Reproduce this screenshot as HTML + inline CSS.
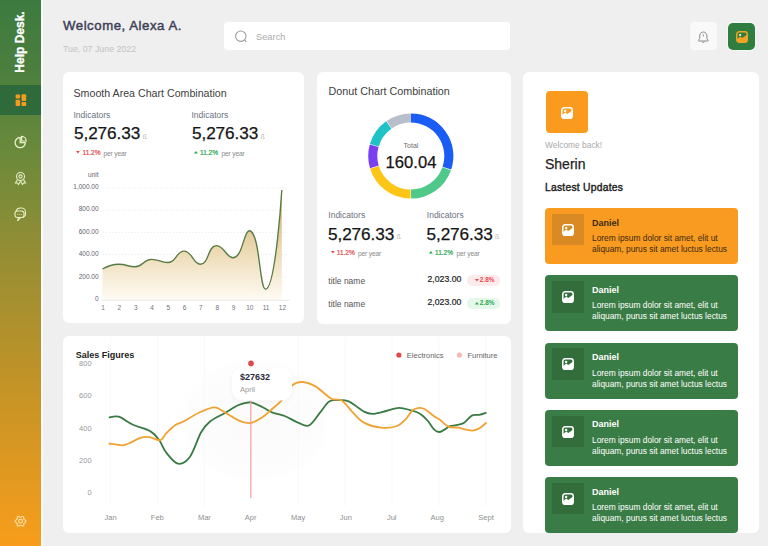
<!DOCTYPE html>
<html><head><meta charset="utf-8">
<style>
*{margin:0;padding:0;box-sizing:border-box}
html,body{width:768px;height:546px;overflow:hidden;background:#efefef;font-family:"Liberation Sans",sans-serif;position:relative}
.a{position:absolute;white-space:nowrap}
.card{position:absolute;background:#fff;border-radius:6px}
#side{position:absolute;left:0;top:0;width:41px;height:546px;background:linear-gradient(180deg,#3c7b40 0%,#4a7e3e 12%,#6b8a3b 28%,#988e33 48%,#c69426 72%,#f89d1b 100%)}
#sline{position:absolute;left:41px;top:0;width:2px;height:546px;background:#fafafa}
.t{color:#222}
.ind{font-size:8.5px;color:#6b7280}
.num{font-size:17.2px;color:#151515;letter-spacing:-0.1px;-webkit-text-stroke:0.25px #151515}
.unit{font-size:7px;color:#b8b8b8;margin-top:0.5px}
.chg{font-size:6.5px;-webkit-text-stroke:0.2px currentColor}
.py{font-size:6.7px;color:#8a8a8a;margin-top:0px;letter-spacing:-0.18px}
.item{position:absolute;left:22px;width:193px;height:56px;border-radius:4px}
.item .ib{position:absolute;left:6.5px;top:5.8px;width:32px;height:31.5px}
.item .nm{position:absolute;left:47px;top:9.5px;font-size:9px;font-weight:bold}
.item .l1{position:absolute;left:47px;top:25px;font-size:8.4px}
.item .l2{position:absolute;left:47px;top:36.2px;font-size:8.4px}
.org{background:#fa9b21}
.org .ib{background:#d98a24}
.org .nm,.org .l1,.org .l2{color:#3b2a12}
.grn{background:#3a7c45}
.grn .ib{background:#336d3c}
.grn .nm,.grn .l1,.grn .l2{color:#fff}
</style></head><body>
<div id="side"></div>
<div id="sline"></div>
<!-- Help Desk -->
<div class="a" style="left:20px;top:42px;transform:translate(-50%,-50%) rotate(-90deg);color:#fff;font-weight:bold;font-size:12px;-webkit-text-stroke:0.3px #fff">Help Desk.</div>
<div class="a" style="left:0;top:85px;width:41px;height:30px;background:#2f6a3a"></div>
<svg class="a" style="left:0;top:0" width="41" height="546" viewBox="0 0 41 546">
  <g fill="#f39c1f">
    <rect x="15.6" y="94.6" width="4.5" height="3.8" rx="0.8"/>
    <rect x="21.5" y="94.3" width="4.7" height="6.6" rx="0.8"/>
    <rect x="15.6" y="99.8" width="4.5" height="6.2" rx="0.8"/>
    <rect x="21.5" y="102.1" width="4.7" height="3.9" rx="0.8"/>
  </g>
  <g fill="none" stroke="#e6efc6" stroke-width="1.1">
    <path d="M20.2,137.5 A5.1,5.1 0 1 0 25.3,142.6 L20.2,142.6 Z" stroke-width="1.3"/>
    <path d="M21.6,136.4 A4.6,4.6 0 0 1 26.2,141 L21.6,141 Z" stroke-width="1.2"/>
    <circle cx="20.5" cy="176.5" r="4"/>
    <circle cx="20.5" cy="176.5" r="1.6"/>
    <path d="M17.5,179.5 L15.5,183 L17.5,183 L18.5,184.5 L20.5,181"/>
    <path d="M23.5,179.5 L25.5,183 L23.5,183 L22.5,184.5 L20.5,181"/>
    <path d="M16,211 a4.5,4.5 0 0 1 4.5,-3 h1 a4,4 0 0 1 4,4 v2 a4,4 0 0 1 -3,3.5"/>
    <rect x="15" y="211" width="9" height="6.5" rx="2.5"/>
    <path d="M17.5,221 l1.2,-3.5 h2 z"/>
  </g>
  <g fill="#e6efc6"><circle cx="17.8" cy="214.2" r="0.5"/><circle cx="19.5" cy="214.2" r="0.5"/><circle cx="21.2" cy="214.2" r="0.5"/></g>
  <g fill="none" stroke="#fde2a8" stroke-width="1.1">
    <path d="M20.50,517.30 L20.86,517.22 L21.26,517.02 L21.72,516.76 L22.23,516.55 L22.74,516.49 L23.20,516.62 L23.54,516.95 L23.75,517.43 L23.82,517.98 L23.83,518.50 L23.85,518.95 L23.96,519.30 L24.21,519.57 L24.59,519.81 L25.04,520.08 L25.47,520.42 L25.79,520.84 L25.90,521.30 L25.79,521.76 L25.47,522.18 L25.04,522.52 L24.59,522.79 L24.21,523.03 L23.96,523.30 L23.85,523.65 L23.83,524.10 L23.82,524.62 L23.75,525.17 L23.54,525.65 L23.20,525.98 L22.74,526.11 L22.23,526.05 L21.72,525.84 L21.26,525.58 L20.86,525.38 L20.50,525.30 L20.14,525.38 L19.74,525.58 L19.28,525.84 L18.77,526.05 L18.26,526.11 L17.80,525.98 L17.46,525.65 L17.25,525.17 L17.18,524.62 L17.17,524.10 L17.15,523.65 L17.04,523.30 L16.79,523.03 L16.41,522.79 L15.96,522.52 L15.53,522.18 L15.21,521.76 L15.10,521.30 L15.21,520.84 L15.53,520.42 L15.96,520.08 L16.41,519.81 L16.79,519.57 L17.04,519.30 L17.15,518.95 L17.17,518.50 L17.18,517.98 L17.25,517.43 L17.46,516.95 L17.80,516.62 L18.26,516.49 L18.77,516.55 L19.28,516.76 L19.74,517.02 L20.14,517.22 L20.50,517.30Z" stroke-linejoin="round"/>
    <circle cx="20.5" cy="521.3" r="1.9"/>
  </g>
</svg>

<!-- header -->
<div class="a" style="left:63px;top:18.3px;font-size:13.2px;color:#3d3f58;letter-spacing:0.55px;-webkit-text-stroke:0.45px #3d3f58">Welcome, Alexa A.</div>
<div class="a" style="left:63px;top:43.5px;font-size:8.8px;color:#c3c3c3">Tue, 07 June 2022</div>
<div class="a" style="left:224px;top:22px;width:286px;height:28px;background:#fff;border-radius:4px"></div>
<svg class="a" style="left:230px;top:26px" width="22" height="22" viewBox="0 0 22 22"><circle cx="10.8" cy="10.2" r="5.2" fill="none" stroke="#9c9c9c" stroke-width="1.1"/><path d="M14.6,14 L16.3,15.8" stroke="#9c9c9c" stroke-width="1.1"/></svg>
<div class="a" style="left:256px;top:31.8px;font-size:9.3px;color:#ababab">Search</div>
<div class="a" style="left:690px;top:22px;width:27px;height:28px;background:#f9f9f9;border-radius:4px"></div>
<svg class="a" style="left:690px;top:22px" width="27" height="28" viewBox="0 0 27 28"><path d="M13.3,10 c-2.3,0 -3.6,1.8 -3.6,4 v2.6 l-1.3,1.8 c-0.2,0.3 0,0.6 0.3,0.6 h9.2 c0.3,0 0.5,-0.3 0.3,-0.6 l-1.3,-1.8 v-2.6 c0,-2.2 -1.3,-4 -3.6,-4 z" fill="none" stroke="#8a8a8a" stroke-width="1"/><path d="M12.3,19.5 a1,1 0 0 0 2,0" fill="none" stroke="#8a8a8a" stroke-width="0.9"/><path d="M13.3,12.3 v2.2" stroke="#8a8a8a" stroke-width="0.9"/></svg>
<div class="a" style="left:727.5px;top:22.5px;width:27.5px;height:27px;background:#2f7d3f;border-radius:5px;box-shadow:0 0 0 1px #f6f6f6"></div>
<svg class="a" style="left:735.5px;top:30.5px" width="12" height="12" viewBox="0 0 12 12"><rect x="0.8" y="0.8" width="10.4" height="10.4" rx="2.3" fill="none" stroke="#f2a224" stroke-width="1.5"/><path d="M0.8,8.3 L4.3,5.6 L6.3,7 L11.2,3.6 V9 a2.2,2.2 0 0 1 -2.2,2.2 H3 a2.2,2.2 0 0 1 -2.2,-2.2 Z" fill="#f2a224"/><circle cx="4.1" cy="3.9" r="1.2" fill="#e9d9a0"/></svg>

<!-- card 1 -->
<div class="card" style="left:63px;top:72px;width:241px;height:251px"></div>
<div class="a t" style="left:73.5px;top:87px;font-size:10.65px;color:#404040">Smooth Area Chart Combination</div>
<div class="a ind" style="left:73.5px;top:109.5px">Indicators</div>
<div class="a num" style="left:74px;top:122.8px">5,276.33</div>
<div class="a unit" style="left:142.5px;top:132px">ß</div>
<svg class="a" style="left:76.3px;top:151.3px" width="4" height="3"><polygon points="0,0 3.8,0 1.9,2.5" fill="#e5484d"/></svg><div class="a chg" style="left:82.5px;top:148.6px;color:#e5484d">11.2%</div>
<div class="a py" style="left:103.5px;top:149.5px">per year</div>
<div class="a ind" style="left:191.5px;top:109.5px">Indicators</div>
<div class="a num" style="left:192px;top:122.8px">5,276.33</div>
<div class="a unit" style="left:260.5px;top:132px">ß</div>
<svg class="a" style="left:194.3px;top:151.3px" width="4" height="3"><polygon points="0,2.5 3.8,2.5 1.9,0" fill="#1fa84f"/></svg><div class="a chg" style="left:200px;top:148.6px;color:#1fa84f">11.2%</div>
<div class="a py" style="left:221.5px;top:149.5px">per year</div>

<svg class="a" style="left:0;top:0" width="768" height="546" viewBox="0 0 768 546">
  <defs>
    <linearGradient id="ag" x1="0" y1="0" x2="0" y2="1">
      <stop offset="0" stop-color="#c4a866"/>
      <stop offset="0.5" stop-color="#e9d6ac"/>
      <stop offset="1" stop-color="#fffbf3"/>
    </linearGradient>
  </defs>
  <g stroke="#ededed" stroke-width="0.9" stroke-dasharray="1.6,1.6" transform="translate(0,0.4)">
    <line x1="102.5" y1="187.5" x2="288" y2="187.5"/>
    <line x1="102.5" y1="209.8" x2="288" y2="209.8"/>
    <line x1="102.5" y1="232" x2="288" y2="232"/>
    <line x1="102.5" y1="254.3" x2="288" y2="254.3"/>
    <line x1="102.5" y1="276.6" x2="288" y2="276.6"/>
  </g>
  <path d="M102.50,269.01 C102.50,269.01 110.53,264.21 118.80,264.21 C126.83,264.21 127.29,266.78 135.10,266.78 C143.59,266.78 142.94,259.31 151.40,259.31 C159.24,259.31 160.29,262.54 167.70,262.54 C176.59,262.54 176.05,251.06 184.00,251.06 C192.35,251.06 192.83,264.21 200.30,264.21 C209.13,264.21 207.65,245.59 216.60,245.59 C223.95,245.59 226.51,257.75 232.90,257.75 C242.81,257.75 243.63,230.76 249.20,230.76 C259.93,230.76 259.37,289.19 265.50,289.19 C275.67,289.19 281.80,189.95 281.80,189.95 L281.80,300.00 L102.50,300.00 Z" fill="url(#ag)"/>
  <path d="M102.50,269.01 C102.50,269.01 110.53,264.21 118.80,264.21 C126.83,264.21 127.29,266.78 135.10,266.78 C143.59,266.78 142.94,259.31 151.40,259.31 C159.24,259.31 160.29,262.54 167.70,262.54 C176.59,262.54 176.05,251.06 184.00,251.06 C192.35,251.06 192.83,264.21 200.30,264.21 C209.13,264.21 207.65,245.59 216.60,245.59 C223.95,245.59 226.51,257.75 232.90,257.75 C242.81,257.75 243.63,230.76 249.20,230.76 C259.93,230.76 259.37,289.19 265.50,289.19 C275.67,289.19 281.80,189.95 281.80,189.95" fill="none" stroke="#587a44" stroke-width="1.35"/>
  <line x1="102" y1="300.3" x2="289.5" y2="300.3" stroke="#e2e2e2" stroke-width="0.8"/>
  <g font-family="Liberation Sans" font-size="6.5" fill="#5f636d" text-anchor="end">
    <text x="98.6" y="177">unit</text>
    <text x="98.6" y="188.5">1,000.00</text>
    <text x="98.6" y="211">800.00</text>
    <text x="98.6" y="233.5">600.00</text>
    <text x="98.6" y="256">400.00</text>
    <text x="98.6" y="278.5">200.00</text>
    <text x="98.6" y="301">0</text>
  </g>
  <g font-family="Liberation Sans" font-size="6.5" fill="#6e727a" text-anchor="middle" transform="translate(0.6,0.4)">
    <text x="102.5" y="310">1</text><text x="118.8" y="310">2</text><text x="135.1" y="310">3</text><text x="151.4" y="310">4</text>
    <text x="167.7" y="310">5</text><text x="184" y="310">6</text><text x="200.3" y="310">7</text><text x="216.6" y="310">8</text>
    <text x="232.9" y="310">9</text><text x="249.2" y="310">10</text><text x="265.5" y="310">11</text><text x="281.8" y="310">12</text>
  </g>
</svg>

<!-- card 2 -->
<div class="card" style="left:317px;top:72px;width:194px;height:252px"></div>
<div class="a t" style="left:328.5px;top:85px;font-size:10.75px;color:#404040">Donut Chart Combination</div>
<svg class="a" style="left:0;top:0" width="768" height="546" viewBox="0 0 768 546">
  <path d="M410.80,113.40 A42.60,42.60 0 0 1 451.17,169.59 L442.55,166.69 A33.50,33.50 0 0 0 410.80,122.50 Z" fill="#1b5cf5"/><path d="M450.98,170.15 A42.60,42.60 0 0 1 411.10,198.60 L411.03,189.50 A33.50,33.50 0 0 0 442.40,167.13 Z" fill="#4fc98a"/><path d="M410.50,198.60 A42.60,42.60 0 0 1 370.15,168.74 L378.83,166.02 A33.50,33.50 0 0 0 410.57,189.50 Z" fill="#fdc516"/><path d="M369.98,168.17 A42.60,42.60 0 0 1 369.77,144.54 L378.53,146.99 A33.50,33.50 0 0 0 378.70,165.57 Z" fill="#7a3ff0"/><path d="M369.93,143.97 A42.60,42.60 0 0 1 386.12,121.28 L391.39,128.69 A33.50,33.50 0 0 0 378.66,146.54 Z" fill="#1ec3c6"/><path d="M386.61,120.93 A42.60,42.60 0 0 1 410.80,113.40 L410.80,122.50 A33.50,33.50 0 0 0 391.78,128.42 Z" fill="#b9bfca"/>
  <text x="411" y="148" font-family="Liberation Sans" font-size="7" fill="#6a6a6a" text-anchor="middle">Total</text>
  <text x="411" y="168" font-family="Liberation Sans" font-size="16.6" fill="#151515" stroke="#151515" stroke-width="0.25" text-anchor="middle">160.04</text>
</svg>
<div class="a ind" style="left:328.3px;top:209.5px">Indicators</div>
<div class="a num" style="left:328px;top:223.5px">5,276.33</div>
<div class="a unit" style="left:396.5px;top:232px">ß</div>
<svg class="a" style="left:330.5px;top:251.3px" width="4" height="3"><polygon points="0,0 3.8,0 1.9,2.5" fill="#e5484d"/></svg><div class="a chg" style="left:336.8px;top:248.6px;color:#e5484d">11.2%</div>
<div class="a py" style="left:358px;top:249.5px">per year</div>
<div class="a ind" style="left:426.8px;top:209.5px">Indicators</div>
<div class="a num" style="left:426.5px;top:223.5px">5,276.33</div>
<div class="a unit" style="left:495px;top:232px">ß</div>
<svg class="a" style="left:429px;top:251.3px" width="4" height="3"><polygon points="0,2.5 3.8,2.5 1.9,0" fill="#1fa84f"/></svg><div class="a chg" style="left:435px;top:248.6px;color:#1fa84f">11.2%</div>
<div class="a py" style="left:456.5px;top:249.5px">per year</div>
<div class="a" style="left:328.3px;top:275.5px;font-size:8.5px;color:#555">title name</div>
<div class="a" style="left:427.5px;top:274px;font-size:8.7px;color:#222;-webkit-text-stroke:0.2px #222">2,023.00</div>
<div class="a" style="left:466.5px;top:275px;width:33px;height:10.5px;border-radius:5px;background:#fdeaea"></div>
<svg class="a" style="left:474.5px;top:279.3px" width="4" height="3"><polygon points="0,0 3.8,0 1.9,2.5" fill="#e5484d"/></svg><div class="a" style="left:479.8px;top:276px;font-size:6.4px;font-weight:bold;color:#e5484d">2.8%</div>
<div class="a" style="left:328.3px;top:298.5px;font-size:8.5px;color:#555">title name</div>
<div class="a" style="left:427.5px;top:297px;font-size:8.7px;color:#222;-webkit-text-stroke:0.2px #222">2,023.00</div>
<div class="a" style="left:466.5px;top:298px;width:33px;height:10.5px;border-radius:5px;background:#e6f8e9"></div>
<svg class="a" style="left:474.5px;top:302.3px" width="4" height="3"><polygon points="0,2.5 3.8,2.5 1.9,0" fill="#1fa84f"/></svg><div class="a" style="left:479.8px;top:299px;font-size:6.4px;font-weight:bold;color:#1fa84f">2.8%</div>

<!-- bottom card -->
<div class="card" style="left:63px;top:336px;width:448px;height:197px"></div>
<svg class="a" style="left:0;top:0" width="768" height="546" viewBox="0 0 768 546">
  <defs>
    <radialGradient id="blob" cx="0.5" cy="0.5" r="0.5">
      <stop offset="0" stop-color="#fbfbfb"/>
      <stop offset="0.8" stop-color="#fdfdfd"/>
      <stop offset="1" stop-color="#ffffff" stop-opacity="0"/>
    </radialGradient>
    <filter id="sh" x="-30%" y="-30%" width="160%" height="160%"><feGaussianBlur stdDeviation="2"/></filter>
  </defs>
  <ellipse cx="255" cy="420" rx="85" ry="70" fill="url(#blob)"/>
  <g stroke="#f6f6f6" stroke-width="0.8">
    <line x1="110.6" y1="337" x2="110.6" y2="506"/>
    <line x1="157.5" y1="337" x2="157.5" y2="506"/>
    <line x1="204.4" y1="337" x2="204.4" y2="506"/>
    <line x1="298.2" y1="337" x2="298.2" y2="506"/>
    <line x1="345.1" y1="337" x2="345.1" y2="506"/>
    <line x1="392" y1="337" x2="392" y2="506"/>
    <line x1="438.9" y1="337" x2="438.9" y2="506"/>
    <line x1="485.8" y1="337" x2="485.8" y2="506"/>
  </g>
  <path d="M108.80,417.60 C110.45,417.45 114.67,415.50 118.70,416.70 C122.73,417.90 127.70,422.35 133.00,424.80 C138.30,427.25 146.12,428.83 150.50,431.40 C154.88,433.97 156.72,436.72 159.30,440.20 C161.88,443.68 162.88,448.38 166.00,452.30 C169.12,456.22 174.00,462.97 178.00,463.70 C182.00,464.43 186.17,461.90 190.00,456.70 C193.83,451.50 197.67,438.37 201.00,432.50 C204.33,426.63 205.93,424.80 210.00,421.50 C214.07,418.20 220.63,415.45 225.40,412.70 C230.17,409.95 234.38,406.72 238.60,405.00 C242.82,403.28 246.68,402.02 250.70,402.40 C254.72,402.78 259.05,405.58 262.70,407.30 C266.35,409.02 268.93,411.25 272.60,412.70 C276.27,414.15 280.47,414.35 284.70,416.00 C288.93,417.65 293.95,421.02 298.00,422.60 C302.05,424.18 305.33,427.15 309.00,425.50 C312.67,423.85 316.70,416.65 320.00,412.70 C323.30,408.75 326.05,403.88 328.80,401.80 C331.55,399.72 333.20,400.28 336.50,400.20 C339.80,400.12 344.02,399.40 348.60,401.30 C353.18,403.20 359.98,409.52 364.00,411.60 C368.02,413.68 369.03,413.90 372.70,413.80 C376.37,413.70 381.62,411.98 386.00,411.00 C390.38,410.02 395.00,408.05 399.00,407.90 C403.00,407.75 406.50,409.13 410.00,410.10 C413.50,411.07 417.02,411.88 420.00,413.70 C422.98,415.52 425.62,418.43 427.90,421.00 C430.18,423.57 431.87,427.27 433.70,429.10 C435.53,430.93 437.18,431.87 438.90,432.00 C440.62,432.13 442.17,430.87 444.00,429.90 C445.83,428.93 447.45,427.07 449.90,426.20 C452.35,425.33 456.27,425.32 458.70,424.70 C461.13,424.08 462.32,424.02 464.50,422.50 C466.68,420.98 469.35,416.88 471.80,415.60 C474.25,414.32 476.75,415.30 479.20,414.80 C481.65,414.30 485.28,412.97 486.50,412.60" fill="none" stroke="#3a7a43" stroke-width="1.8"/>
  <path d="M108.80,443.50 C111.00,443.80 118.70,445.30 122.00,445.30 C125.30,445.30 125.30,444.82 128.60,443.50 C131.90,442.18 138.15,438.42 141.80,437.40 C145.45,436.38 147.40,436.93 150.50,437.40 C153.60,437.87 157.82,440.83 160.40,440.20 C162.98,439.57 163.43,436.17 166.00,433.60 C168.57,431.03 172.88,426.82 175.80,424.80 C178.72,422.78 179.63,423.52 183.50,421.50 C187.37,419.48 193.87,415.07 199.00,412.70 C204.13,410.33 209.90,407.30 214.30,407.30 C218.70,407.30 221.35,410.52 225.40,412.70 C229.45,414.88 234.38,418.68 238.60,420.40 C242.82,422.12 246.68,423.55 250.70,423.00 C254.72,422.45 259.23,419.35 262.70,417.10 C266.17,414.85 268.38,412.23 271.50,409.50 C274.62,406.77 277.92,404.73 281.40,400.70 C284.88,396.67 288.92,388.42 292.40,385.30 C295.88,382.18 298.45,381.82 302.30,382.00 C306.15,382.18 310.72,383.65 315.50,386.40 C320.28,389.15 326.58,396.12 331.00,398.50 C335.42,400.88 338.33,398.33 342.00,400.70 C345.67,403.07 349.33,409.05 353.00,412.70 C356.67,416.35 359.25,420.10 364.00,422.60 C368.75,425.10 376.00,427.13 381.50,427.70 C387.00,428.27 392.97,427.40 397.00,426.00 C401.03,424.60 403.15,421.88 405.70,419.30 C408.25,416.72 410.08,412.40 412.30,410.50 C414.52,408.60 416.88,408.10 419.00,407.90 C421.12,407.70 422.55,407.95 425.00,409.30 C427.45,410.65 431.27,414.28 433.70,416.00 C436.13,417.72 437.15,417.83 439.60,419.60 C442.05,421.37 445.22,425.25 448.40,426.60 C451.58,427.95 455.77,427.20 458.70,427.70 C461.63,428.20 463.68,429.12 466.00,429.60 C468.32,430.08 470.40,430.80 472.60,430.60 C474.80,430.40 476.88,429.75 479.20,428.40 C481.52,427.05 485.28,423.48 486.50,422.50" fill="none" stroke="#f0a232" stroke-width="1.8"/>
  <line x1="250.8" y1="368" x2="250.8" y2="498" stroke="#f3a0a0" stroke-width="1.2"/>
  <rect x="232" y="369" width="60" height="33" rx="10" fill="#000" opacity="0.05" filter="url(#sh)"/>
  <rect x="232" y="367.5" width="60" height="33" rx="10" fill="#fff"/>
  <circle cx="251" cy="363.4" r="2.8" fill="#e04848"/>
  <text x="240" y="380" font-family="Liberation Sans" font-size="9" font-weight="bold" fill="#2b2b3a">$27632</text>
  <text x="240" y="391.5" font-family="Liberation Sans" font-size="7.5" fill="#9a9a9a">April</text>
  <text x="75.8" y="358" font-family="Liberation Sans" font-size="9" font-weight="bold" fill="#222">Sales Figures</text>
  <g font-family="Liberation Sans" font-size="7.5" fill="#999" text-anchor="end">
    <text x="91.6" y="365.5">800</text>
    <text x="91.6" y="398">600</text>
    <text x="91.6" y="430.5">400</text>
    <text x="91.6" y="462.5">200</text>
    <text x="91.6" y="495">0</text>
  </g>
  <g font-family="Liberation Sans" font-size="7.5" fill="#8f8f8f" text-anchor="middle">
    <text x="110.6" y="520">Jan</text><text x="157.3" y="520">Feb</text><text x="204.4" y="520">Mar</text><text x="250.7" y="520">Apr</text>
    <text x="298.1" y="520">May</text><text x="345.8" y="520">Jun</text><text x="391.7" y="520">Jul</text><text x="437.3" y="520">Aug</text><text x="486" y="520">Sept</text>
  </g>
  <circle cx="398.9" cy="355" r="2.6" fill="#e04848"/>
  <text x="406.8" y="357.6" font-family="Liberation Sans" font-size="7.5" fill="#666">Electronics</text>
  <circle cx="459.4" cy="355" r="2.6" fill="#f7b8b8"/>
  <text x="467.4" y="357.6" font-family="Liberation Sans" font-size="7.5" fill="#666">Furniture</text>
</svg>

<!-- right card -->
<div class="card" style="left:523px;top:72px;width:236px;height:461px;overflow:hidden">
  <div class="a" style="left:22.5px;top:19px;width:42px;height:41.5px;background:#fa9b1f;border-radius:4px"></div>
  <svg class="a" style="left:38px;top:34.5px" width="12" height="12" viewBox="0 0 12 12"><rect x="0.8" y="0.8" width="10.4" height="10.6" rx="2.3" fill="none" stroke="#fff" stroke-width="1.5"/><path d="M0.8,8.3 L4.3,5.6 L6.3,7 L11.2,3.6 V9.2 a2.2,2.2 0 0 1 -2.2,2.2 H3 a2.2,2.2 0 0 1 -2.2,-2.2 Z" fill="#fff"/><circle cx="4.1" cy="3.9" r="1.25" fill="#fff"/></svg>
  <div class="a" style="left:22px;top:67.5px;font-size:8.4px;color:#a9a9a9">Welcome back!</div>
  <div class="a" style="left:22px;top:84px;font-size:14px;color:#1e1e1e;-webkit-text-stroke:0.25px #1e1e1e">Sherin</div>
  <div class="a" style="left:22px;top:110px;font-size:10.3px;color:#1e1e1e;letter-spacing:0.25px;-webkit-text-stroke:0.4px #1e1e1e">Lastest Updates</div>
  <div class="item org" style="top:136.0px"><div class="ib"><svg class="a" style="left:10px;top:10px" width="12" height="12" viewBox="0 0 12 12"><rect x="0.8" y="0.8" width="10.4" height="10.6" rx="2.3" fill="none" stroke="#fff" stroke-width="1.5"/><path d="M0.8,8.3 L4.3,5.6 L6.3,7 L11.2,3.6 V9.2 a2.2,2.2 0 0 1 -2.2,2.2 H3 a2.2,2.2 0 0 1 -2.2,-2.2 Z" fill="#fff"/><circle cx="4.1" cy="3.9" r="1.25" fill="#fff"/></svg></div><div class="nm">Daniel</div><div class="l1">Lorem ipsum dolor sit amet, elit ut</div><div class="l2">aliquam, purus sit amet luctus lectus</div></div>
<div class="item grn" style="top:203.25px"><div class="ib"><svg class="a" style="left:10px;top:10px" width="12" height="12" viewBox="0 0 12 12"><rect x="0.8" y="0.8" width="10.4" height="10.6" rx="2.3" fill="none" stroke="#fff" stroke-width="1.5"/><path d="M0.8,8.3 L4.3,5.6 L6.3,7 L11.2,3.6 V9.2 a2.2,2.2 0 0 1 -2.2,2.2 H3 a2.2,2.2 0 0 1 -2.2,-2.2 Z" fill="#fff"/><circle cx="4.1" cy="3.9" r="1.25" fill="#fff"/></svg></div><div class="nm">Daniel</div><div class="l1">Lorem ipsum dolor sit amet, elit ut</div><div class="l2">aliquam, purus sit amet luctus lectus</div></div>
<div class="item grn" style="top:270.5px"><div class="ib"><svg class="a" style="left:10px;top:10px" width="12" height="12" viewBox="0 0 12 12"><rect x="0.8" y="0.8" width="10.4" height="10.6" rx="2.3" fill="none" stroke="#fff" stroke-width="1.5"/><path d="M0.8,8.3 L4.3,5.6 L6.3,7 L11.2,3.6 V9.2 a2.2,2.2 0 0 1 -2.2,2.2 H3 a2.2,2.2 0 0 1 -2.2,-2.2 Z" fill="#fff"/><circle cx="4.1" cy="3.9" r="1.25" fill="#fff"/></svg></div><div class="nm">Daniel</div><div class="l1">Lorem ipsum dolor sit amet, elit ut</div><div class="l2">aliquam, purus sit amet luctus lectus</div></div>
<div class="item grn" style="top:337.75px"><div class="ib"><svg class="a" style="left:10px;top:10px" width="12" height="12" viewBox="0 0 12 12"><rect x="0.8" y="0.8" width="10.4" height="10.6" rx="2.3" fill="none" stroke="#fff" stroke-width="1.5"/><path d="M0.8,8.3 L4.3,5.6 L6.3,7 L11.2,3.6 V9.2 a2.2,2.2 0 0 1 -2.2,2.2 H3 a2.2,2.2 0 0 1 -2.2,-2.2 Z" fill="#fff"/><circle cx="4.1" cy="3.9" r="1.25" fill="#fff"/></svg></div><div class="nm">Daniel</div><div class="l1">Lorem ipsum dolor sit amet, elit ut</div><div class="l2">aliquam, purus sit amet luctus lectus</div></div>
<div class="item grn" style="top:405.0px"><div class="ib"><svg class="a" style="left:10px;top:10px" width="12" height="12" viewBox="0 0 12 12"><rect x="0.8" y="0.8" width="10.4" height="10.6" rx="2.3" fill="none" stroke="#fff" stroke-width="1.5"/><path d="M0.8,8.3 L4.3,5.6 L6.3,7 L11.2,3.6 V9.2 a2.2,2.2 0 0 1 -2.2,2.2 H3 a2.2,2.2 0 0 1 -2.2,-2.2 Z" fill="#fff"/><circle cx="4.1" cy="3.9" r="1.25" fill="#fff"/></svg></div><div class="nm">Daniel</div><div class="l1">Lorem ipsum dolor sit amet, elit ut</div><div class="l2">aliquam, purus sit amet luctus lectus</div></div>

</div>
</body></html>
